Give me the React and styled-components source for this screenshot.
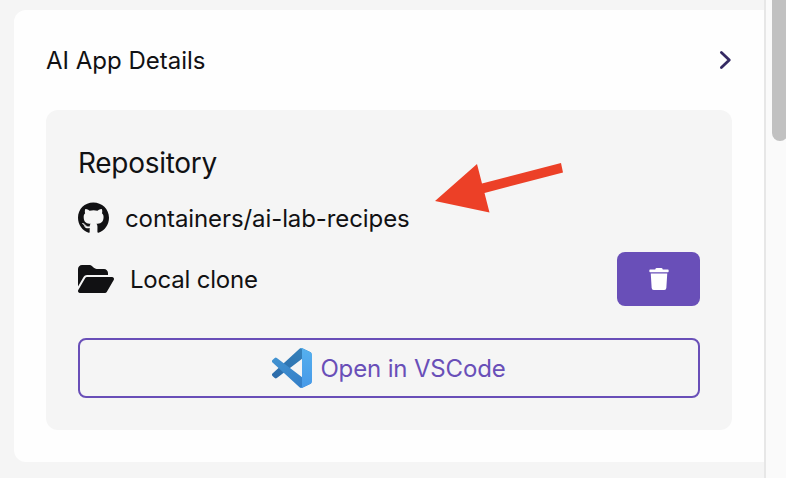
import React from "react";
import styled, { createGlobalStyle } from "styled-components";
import { FaGithub, FaFolderOpen } from "react-icons/fa6";
import { FaTrash } from "react-icons/fa";

const GlobalStyle = createGlobalStyle`
  *, *::before, *::after { box-sizing: border-box; }
  body {
    margin: 0;
    overflow: hidden;
    background: #f5f5f5;
    color: #111113;
    font-family: Inter, "Liberation Sans", sans-serif;
    font-size: 24px;
    line-height: 32px;
  }
`;

const Page = styled.div`
  display: flex;
  width: 786px;
  height: 478px;
  overflow: hidden;
`;

const Main = styled.main`
  flex: 1;
  padding: 10px 0 16px 14px;
`;

const Card = styled.section`
  height: 452px;
  padding: 32px;
  background: #fefefe;
  border-radius: 12px 0 0 12px;
`;

const CardHeader = styled.header`
  display: flex;
  align-items: center;
  justify-content: space-between;
  height: 36px;
  margin-bottom: 32px;
`;

const Chevron = styled.svg`
  width: 14px;
  height: 20px;
`;

const Panel = styled.div`
  position: relative;
  display: flex;
  flex-direction: column;
  height: 320px;
  padding: 32px;
  background: #f5f5f5;
  border-radius: 12px;
`;

const Label = styled.span`
  padding-top: 2px;
  white-space: nowrap;
  letter-spacing: ${(p) => p.$spacing || 0}px;
`;

const Title = styled.div`
  height: 44px;
  font-size: 28px;
  line-height: 43px;
  letter-spacing: -0.3px;
`;

const Row = styled.div`
  display: flex;
  align-items: center;
  gap: 16px;
  height: ${(p) => p.$height}px;
`;

const GithubIcon = styled(FaGithub)`
  width: 31px;
  height: 32px;
`;

const DeleteButton = styled.button`
  display: flex;
  align-items: center;
  justify-content: center;
  width: 83px;
  height: 54px;
  margin-left: auto;
  padding: 0;
  border: 0;
  border-radius: 8px;
  background: #694fb8;
  color: #fff;
`;

const OpenButton = styled.button`
  display: flex;
  align-items: center;
  justify-content: center;
  gap: 8px;
  height: 60px;
  margin-top: 30px;
  padding: 0;
  border: 2px solid #694fb8;
  border-radius: 8px;
  background: transparent;
  color: #694fb8;
  font: inherit;
`;

const Arrow = styled.svg`
  position: absolute;
  left: 386px;
  top: 50px;
  width: 134px;
  height: 56px;
`;

const ScrollTrack = styled.div`
  width: 22px;
  padding-left: 6px;
  border-left: 2px solid #e7e7e7;
  background: #fafafa;
`;

const ScrollThumb = styled.div`
  width: 16px;
  height: 141px;
  border-radius: 0 0 8px 8px;
  background: #c1c1c1;
`;

function VSCodeIcon() {
  return (
    <svg width="40" height="40" viewBox="0 0 100 100">
      <defs>
        <linearGradient id="back" x1="1" y1="0" x2="0" y2="1">
          <stop offset="0.2" stopColor="#347fb9" />
          <stop offset="1" stopColor="#2b6aa9" />
        </linearGradient>
        <linearGradient id="front" x1="0" y1="0" x2="1" y2="1">
          <stop offset="0" stopColor="#4293d1" />
          <stop offset="1" stopColor="#327bc6" />
        </linearGradient>
        <linearGradient id="side" x1="0" y1="0" x2="0" y2="1">
          <stop offset="0" stopColor="#55b0ee" />
          <stop offset="1" stopColor="#4799e8" />
        </linearGradient>
      </defs>
      <path fill="url(#back)" d="M96.46 10.8 75.86.88a6.25 6.25 0 0 0-7.11 1.2L1.3 63.58a4.17 4.17 0 0 0 0 6.17l5.51 5a4.17 4.17 0 0 0 5.32.24l81.23-61.62C96.09 11.3 100 13.25 100 16.67v-.24a6.25 6.25 0 0 0-3.54-5.63Z" />
      <path fill="url(#front)" d="M96.46 89.2 75.86 99.12a6.25 6.25 0 0 1-7.11-1.2L1.3 36.42a4.17 4.17 0 0 1 0-6.17l5.51-5a4.17 4.17 0 0 1 5.32-.24l81.23 61.62c2.73 2.07 6.64.12 6.64-3.3v.24a6.25 6.25 0 0 1-3.54 5.63Z" />
      <path fill="url(#side)" d="M75.86 99.13a6.25 6.25 0 0 1-7.11-1.21c2.3 2.3 6.25.67 6.25-2.59V4.67c0-3.26-3.94-4.9-6.25-2.59a6.25 6.25 0 0 1 7.11-1.21l20.6 9.91a6.25 6.25 0 0 1 3.54 5.63v67.18a6.25 6.25 0 0 1-3.54 5.63Z" />
    </svg>
  );
}

export default function App() {
  return (
    <Page>
      <GlobalStyle />
      <Main>
        <Card>
          <CardHeader>
            <Label>AI App Details</Label>
            <Chevron viewBox="0 0 14 20" fill="none" stroke="#352a63" strokeWidth="2.8" strokeLinecap="round" strokeLinejoin="round">
              <path d="M3.4 2.4 11.3 10 3.4 17.6" />
            </Chevron>
          </CardHeader>
          <Panel>
            <Title>Repository</Title>
            <Row $height={64}>
              <GithubIcon />
              <Label $spacing={-0.09}>containers/ai-lab-recipes</Label>
            </Row>
            <Row $height={58}>
              <FaFolderOpen size={36} />
              <Label $spacing={-0.2}>Local clone</Label>
              <DeleteButton aria-label="Delete">
                <FaTrash size={22} />
              </DeleteButton>
            </Row>
            <OpenButton>
              <VSCodeIcon />
              <Label $spacing={-0.15}>Open in VSCode</Label>
            </OpenButton>
            <Arrow viewBox="432 160 134 56">
              <path fill="#ec4027" d="M435 201 477 164 482 183.5 561 163 563 172.5 484.5 193 489.5 212.5Z" />
            </Arrow>
          </Panel>
        </Card>
      </Main>
      <ScrollTrack>
        <ScrollThumb />
      </ScrollTrack>
    </Page>
  );
}
